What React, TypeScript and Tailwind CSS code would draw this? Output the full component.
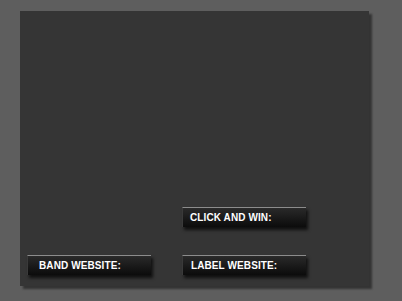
import React from "react";

function Btn({ label, pl }: { label: string; pl: string }) {
  return (
    <div
      className={`w-[124px] h-[20px] flex items-center ${pl} border-t border-t-[#8c8c8c] border-l border-l-[#3a3a3a] bg-gradient-to-b from-[#2a2a2a] to-[#0c0c0c] shadow-[2px_3px_3px_rgba(0,0,0,0.7)] text-white font-bold text-[10px] leading-none tracking-[0.1px]`}
      style={{ fontFamily: '"Liberation Sans", Arial, sans-serif' }}
    >
      {label}
    </div>
  );
}

export default function App() {
  return (
    <div className="w-[402px] h-[301px] bg-[#5e5e5e] pt-[11px] pl-[20px]">
      <div className="w-[349px] h-[275px] bg-[#353535] shadow-[3px_3px_2px_rgba(0,0,0,0.45)] flex flex-col justify-end pb-[11px]">
        <div className="pl-[162px]">
          <Btn label="CLICK AND WIN:" pl="pl-[7px]" />
        </div>
        <div className="flex gap-[31px] pl-[7px] mt-[28px]">
          <Btn label="BAND WEBSITE:" pl="pl-[11px]" />
          <Btn label="LABEL WEBSITE:" pl="pl-[8px]" />
        </div>
      </div>
    </div>
  );
}
